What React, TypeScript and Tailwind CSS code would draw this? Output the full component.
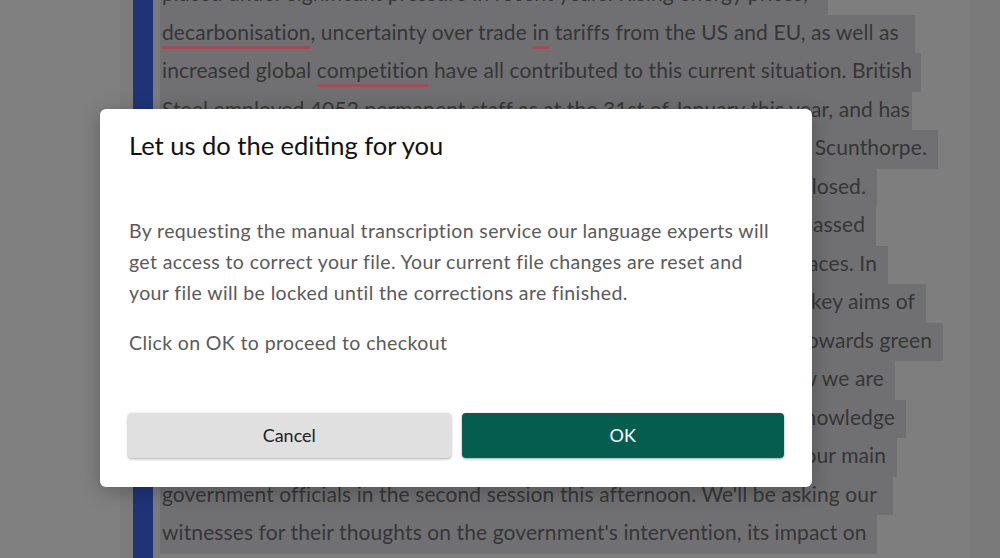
import { FC } from 'react';

type Line = { text: React.ReactNode; width: number; alignEnd?: boolean };

const U: FC<{ children: React.ReactNode }> = ({ children }) => (
  <span className="underline decoration-[#a14d59] decoration-[3px] underline-offset-[6px]">{children}</span>
);

const LINES: Line[] = [
  { text: 'placed under significant pressure in recent years. Rising energy prices,', width: 668 },
  {
    text: (
      <>
        <U>decarbonisation</U>, uncertainty over trade <U>in</U> tariffs from the US and EU, as well as
      </>
    ),
    width: 755,
  },
  {
    text: (
      <>
        increased global <U>competition</U> have all contributed to this current situation. British
      </>
    ),
    width: 761,
  },
  { text: 'Steel employed 4052 permanent staff as at the 31st of January this year, and has', width: 752 },
  { text: 'thousands more jobs in its wider supply chain, the vast majority in Scunthorpe.', width: 778, alignEnd: true },
  { text: 'Last month the government stepped in before the blast furnaces closed.', width: 717, alignEnd: true },
  { text: 'Emergency legislation, the Steel Industry Bill, was rapidly passed', width: 716, alignEnd: true },
  { text: 'through both Houses to keep the furnaces burning in these places. In', width: 728, alignEnd: true },
  { text: 'this inquiry we want to understand what happened and the key aims of', width: 766, alignEnd: true },
  { text: "the government's industrial strategy for the transition towards green", width: 783, alignEnd: true },
  { text: 'steelmaking. This morning we heard from the experts, and now we are', width: 735, alignEnd: true },
  { text: 'keen to build on that evidence and improve our collective knowledge', width: 746, alignEnd: true },
  { text: 'of the sector. I would like to welcome and introduce our main', width: 737, alignEnd: true },
  { text: "government officials in the second session this afternoon. We'll be asking our", width: 733 },
  { text: "witnesses for their thoughts on the government's intervention, its impact on", width: 717 },
];

const Transcript: FC = () => (
  <div className="flex h-[558px] w-full overflow-hidden">
    <div className="w-[120px] bg-[#808080]" />
    <div className="w-[13px] bg-[#7c7c7c]" />
    <div className="w-[20px] bg-[#1f3378]" />
    <div className="w-[7px] bg-[#7b7b7b]" />
    <div className="flex-1 bg-[#7e7e7e]">
      <div className="-mt-[24px] flex flex-col">
        {LINES.map((line, i) =>
          line.alignEnd ? (
            <div
              key={i}
              className="flex h-[38.5px] justify-end overflow-hidden whitespace-nowrap bg-[#707072] pr-[11px] text-[21px] leading-[34px] tracking-[0.1px] text-[#363636] [font-family:Lato,sans-serif]"
              style={{ width: line.width }}
            >
              <span className="shrink-0">{line.text}</span>
            </div>
          ) : (
            <div
              key={i}
              className="h-[38.5px] whitespace-nowrap bg-[#707072] pl-[2px] text-[21px] leading-[34px] tracking-[0.1px] text-[#363636] [font-family:Lato,sans-serif]"
              style={{ width: line.width }}
            >
              {line.text}
            </div>
          ),
        )}
      </div>
    </div>
    <div className="w-[30px] bg-[#7a7a7a]" />
  </div>
);

const EditingModal: FC = () => (
  <div className="absolute inset-0 flex items-start justify-center pt-[109px] pr-[188px] pl-[100px]">
    <div className="w-[712px] rounded-[6px] bg-white px-[28px] pt-[20px] pb-[29px] shadow-[0_4px_20px_rgba(0,0,0,0.25)] [font-family:Lato,sans-serif]">
      <h2 className="pl-[1px] text-[25.5px] leading-[32px] text-[#111]">Let us do the editing for you</h2>
      <div className="mt-[54px] pl-[1px] text-[19.5px] leading-[31px] tracking-[0.38px] text-[#5a5a5a]">
        <p className="whitespace-nowrap">
          By requesting the manual transcription service our language experts will
          <br />
          get access to correct your file. Your current file changes are reset and
          <br />
          your file will be locked until the corrections are finished.
        </p>
        <p className="mt-[19px] whitespace-nowrap">Click on OK to proceed to checkout</p>
      </div>
      <div className="mt-[55px] flex gap-[11px]">
        <button className="h-[45px] flex-1 rounded-[4px] bg-[#e0e0e0] text-[18px] text-[#222] shadow-[0_1px_3px_rgba(0,0,0,0.35)]">
          Cancel
        </button>
        <button className="h-[45px] flex-1 rounded-[4px] bg-[#045d4e] text-[18px] text-white shadow-[0_1px_3px_rgba(0,0,0,0.35)]">
          OK
        </button>
      </div>
    </div>
  </div>
);

const App: FC = () => (
  <div className="relative h-[558px] w-[1000px] overflow-hidden">
    <Transcript />
    <EditingModal />
  </div>
);

export default App;
